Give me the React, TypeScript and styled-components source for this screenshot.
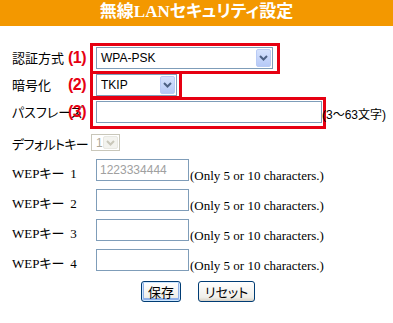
import * as React from 'react';
import styled, { createGlobalStyle } from 'styled-components';

const GlobalStyle = createGlobalStyle`
  body {
    margin: 0;
    background: #ffffff;
    font-family: "Noto Sans CJK JP", sans-serif;
  }
`;

type Frame = { t: number, r: number, b: number, l: number };

const wepKeys = [
  { n: 1, value: '1223334444' },
  { n: 2, value: '' },
  { n: 3, value: '' },
  { n: 4, value: '' }
];

function Chevron ( { disabled }: { disabled?: boolean } ) {
  return (
    <svg width="9" height="6" viewBox="0 0 9 6">
      <path d="M1 1 L4.5 4.5 L8 1" fill="none" stroke={ disabled ? '#c9c7ba' : '#4d6185' } strokeWidth="2" />
    </svg>
  );
}

function FakeSelect ( props: { w: number, h: number, value: string, disabled?: boolean } ) {
  return (
    <SelectBox $w={ props.w } $h={ props.h } $disabled={ props.disabled }>
      <SelectText $disabled={ props.disabled }>{ props.value }</SelectText>
      <ArrowBtn $disabled={ props.disabled }>
        <Chevron disabled={ props.disabled } />
      </ArrowBtn>
    </SelectBox>
  );
}

function Marked ( props: { frame: Frame, children: React.ReactNode } ) {
  const f = props.frame;
  return (
    <MarkWrap>
      { props.children }
      <RedFrame $t={ f.t } $r={ f.r } $b={ f.b } $l={ f.l } />
    </MarkWrap>
  );
}

export default function App () {
  return (
    <Page>
      <GlobalStyle />
      <Header>無線LANセキュリティ設定</Header>
      <Form>
        <Row $h={ 28 }>
          <Label>認証方式</Label>
          <Num>(1)</Num>
          <Marked frame={ { t: 4, r: 7, b: 5, l: 6 } }>
            <FakeSelect w={ 177 } h={ 22 } value="WPA-PSK" />
          </Marked>
        </Row>
        <Row $h={ 26 }>
          <Label>暗号化</Label>
          <Num>(2)</Num>
          <Marked frame={ { t: 3, r: 5, b: 3, l: 6 } }>
            <FakeSelect w={ 81 } h={ 22 } value="TKIP" />
          </Marked>
        </Row>
        <Row $h={ 28 }>
          <Label>パスフレーズ</Label>
          <Num>(3)</Num>
          <Marked frame={ { t: 4, r: 4, b: 6, l: 6 } }>
            <TextBox $w={ 226 } />
          </Marked>
          <Hint>(3～63文字)</Hint>
        </Row>

        <Row $h={ 29 } $bottom>
          <Label $w={ 79 } $low $tight>デフォルトキー</Label>
          <FakeSelect w={ 29 } h={ 17 } value="1" disabled />
        </Row>
        { wepKeys.map( k => (
          <Row $h={ 30 } $bottom key={ k.n }>
            <Label $low>
              <Latin>WEP</Latin>キー&nbsp;&nbsp;<Latin>{ k.n }</Latin>
            </Label>
            <TextBox $w={ 93 } $muted>{ k.value }</TextBox>
            <Note>(Only 5 or 10 characters.)</Note>
          </Row>
        ) ) }
        <Buttons>
          <Button $primary>保存</Button>
          <Button>リセット</Button>
        </Buttons>
      </Form>
    </Page>
  );
}

const Page = styled.div`
  width: 393px;
  height: 323px;
  background: #ffffff;
  color: #000000;
`;

const Header = styled.h1`
  margin: 0;
  height: 26px;
  background: #f39800;
  color: #ffffff;
  font: bold 17px/24px "Liberation Serif", "Noto Sans CJK JP", serif;
  font-feature-settings: "palt";
  text-align: center;
`;

const Form = styled.div`
  display: flex;
  flex-direction: column;
  padding: 18px 0 0 12px;
`;

const Row = styled.div<{ $h: number, $bottom?: boolean }>`
  position: relative;
  display: flex;
  align-items: ${ p => p.$bottom ? 'flex-end' : 'center' };
  height: ${ p => p.$h }px;
  padding-bottom: ${ p => p.$bottom ? 4 : 0 }px;
  box-sizing: border-box;
`;

const Label = styled.div<{ $w?: number, $low?: boolean, $tight?: boolean }>`
  flex: none;
  width: ${ p => p.$w || 84 }px;
  font-size: 13px;
  line-height: 16px;
  font-feature-settings: "palt";
  letter-spacing: ${ p => p.$tight ? -0.6 : 0 }px;
  white-space: nowrap;
  margin-bottom: ${ p => p.$low ? -1 : 0 }px;
`;

const Latin = styled.span`
  font-family: "Liberation Serif", serif;
`;

const Num = styled.span`
  position: absolute;
  left: 56px;
  top: 50%;
  transform: translateY(-50%);
  color: #e60012;
  font: bold 16px/18px "Liberation Sans", sans-serif;
  letter-spacing: -0.5px;
`;

const MarkWrap = styled.span`
  position: relative;
  display: inline-flex;
`;

const RedFrame = styled.span<{ $t: number, $r: number, $b: number, $l: number }>`
  position: absolute;
  z-index: 0;
  top: -${ p => p.$t }px;
  right: -${ p => p.$r }px;
  bottom: -${ p => p.$b }px;
  left: -${ p => p.$l }px;
  border: 3px solid #e60012;
  pointer-events: none;
`;

const SelectBox = styled.div<{ $w: number, $h: number, $disabled?: boolean }>`
  box-sizing: border-box;
  width: ${ p => p.$w }px;
  height: ${ p => p.$h }px;
  display: flex;
  align-items: center;
  justify-content: space-between;
  padding: 1px;
  border: 1px solid ${ p => p.$disabled ? '#c9c7ba' : '#7f9db9' };
  background: #ffffff;
`;

const SelectText = styled.span<{ $disabled?: boolean }>`
  padding-left: 3px;
  font: 12px "Liberation Sans", sans-serif;
  color: ${ p => p.$disabled ? '#aca899' : '#000000' };
`;

const ArrowBtn = styled.span<{ $disabled?: boolean }>`
  box-sizing: border-box;
  width: 15px;
  height: 100%;
  display: flex;
  align-items: center;
  justify-content: center;
  border-radius: 2px;
  border: 1px solid ${ p => p.$disabled ? '#e8e8e2' : '#b9cbf5' };
  background: ${ p => p.$disabled ? '#f3f3ef' : 'linear-gradient(#d6e2fd, #b6c9f7)' };
`;

const TextBox = styled.div<{ $w: number, $muted?: boolean }>`
  box-sizing: border-box;
  width: ${ p => p.$w }px;
  height: 22px;
  border: 1px solid #7f9db9;
  background: #ffffff;
  padding: 0 3px;
  font: 12px/20px "Liberation Sans", sans-serif;
  color: ${ p => p.$muted ? '#a0a0a0' : '#000000' };
`;

const Hint = styled.span`
  position: relative;
  z-index: 1;
  align-self: flex-end;
  margin: 0 0 3px 0;
  font: 12px/15px "Liberation Sans", "Noto Sans CJK JP", sans-serif;
  white-space: nowrap;
`;

const Note = styled.span`
  margin-left: 1px;
  margin-bottom: -2px;
  font: 13px/15px "Liberation Serif", serif;
  white-space: nowrap;
`;

const Buttons = styled.div`
  display: flex;
  gap: 17px;
  padding: 6px 0 0 129px;
`;

const Button = styled.button<{ $primary?: boolean }>`
  height: 21px;
  padding: 0 6px;
  border: 1px solid #003c74;
  border-radius: 3px;
  background: linear-gradient(#ffffff, #f0efea 80%, #d8d2c6);
  box-shadow: ${ p => p.$primary ? 'inset 0 0 0 1px #cee7ff, inset 0 -1px 0 2px #8fb0e8' : 'none' };
  font: 13px/19px "Noto Sans CJK JP", sans-serif;
  font-feature-settings: "palt";
  color: #000000;
`;
